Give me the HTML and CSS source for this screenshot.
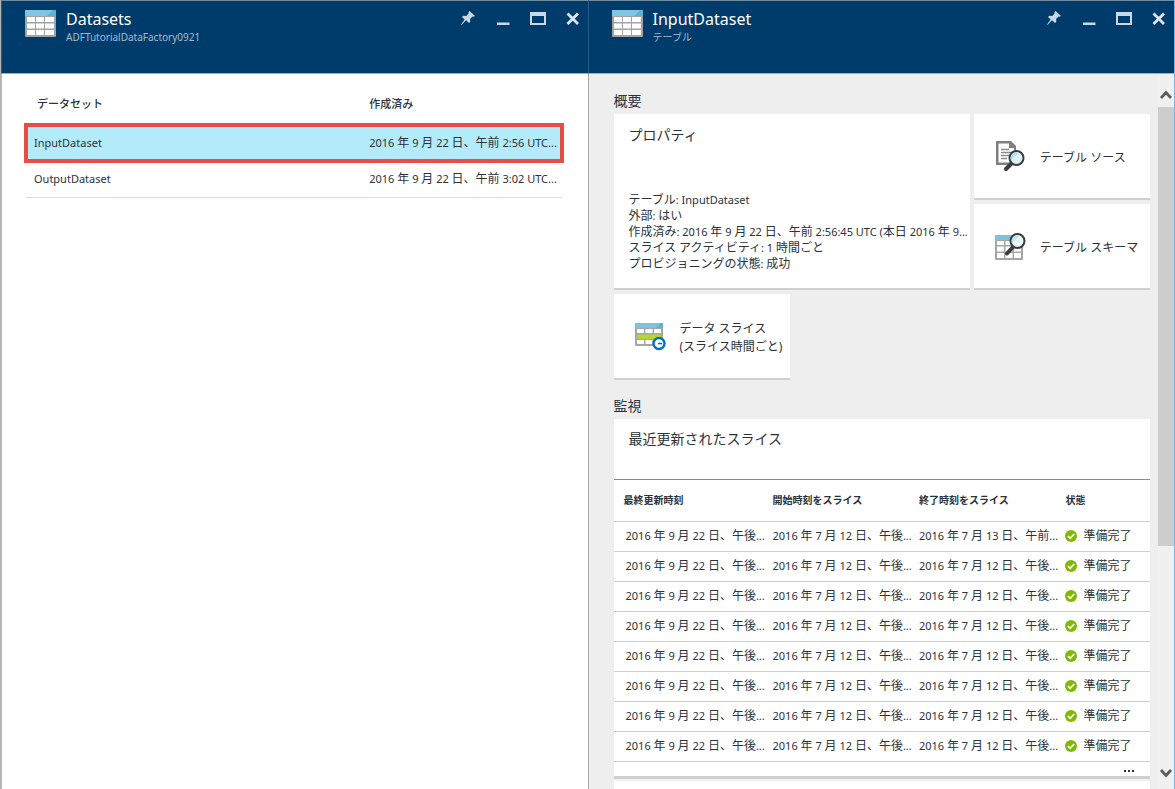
FILE: index.html
```html
<!DOCTYPE html>
<html lang="ja">
<head>
<meta charset="utf-8">
<title>Datasets - InputDataset</title>
<link rel="stylesheet" href="styles.css">
</head>
<body>
<svg class="sprite" aria-hidden="true">
  <symbol id="i-table" viewBox="0 0 31 27">
    <rect width="31" height="27" rx="1" fill="#a3a3a3"/>
    <path d="M0 6V1a1 1 0 0 1 1-1h29a1 1 0 0 1 1 1v5z" fill="#59b4d9"/>
    <path d="M0 6V1a1 1 0 0 1 1-1h27l-6 6z" fill="#7fc6e2"/>
    <path d="M2 7h8v5H2zM11 7h8v5h-8zM20 7h9v5h-9zM2 13.500h8v5H2zM11 13.500h8v5h-8zM20 13.500h9v5h-9zM2 20h8v5H2zM11 20h8v5h-8zM20 20h9v5h-9z" fill="#fff"/>
  </symbol>
  <symbol id="i-pin" viewBox="0 0 16 16">
    <path d="M9.500 1 15 6l-1.600.8-.9-.3-2.400 2.500.2 2.800-1.300 1.200-3-2.800L1.500 15l-.4-.4 3.500-5L2 7l1.300-1.200 3 .1L8.600 3.500l-.2-1z" fill="#c9d8e6"/>
  </symbol>
  <symbol id="i-min" viewBox="0 0 16 16"><path d="M2 12.500h12.500v2.500H2z" fill="#c9d8e6"/></symbol>
  <symbol id="i-max" viewBox="0 0 16 16"><path d="M0 2h16v13H0zM2 6v7h12V6z" fill="#c9d8e6" fill-rule="evenodd"/></symbol>
  <symbol id="i-close" viewBox="0 0 16 16"><path d="m2.500 3.500 10.500 10.500M13 3.500 2.500 14" stroke="#dce6ee" stroke-width="2.800" fill="none"/></symbol>
  <symbol id="i-ok" viewBox="0 0 12 12"><circle cx="6" cy="6" r="6" fill="#7fba00"/><path d="m3 6 2.200 2.300L9.200 4" stroke="#fff" stroke-width="1.800" fill="none"/></symbol>
</svg>

<main class="blades">
  <section class="blade">
    <header class="bar">
      <svg class="bar-icon"><use href="#i-table"/></svg>
      <div class="bar-text">
        <h1>Datasets</h1>
        <p>ADFTutorialDataFactory0921</p>
      </div>
      <div class="bar-actions">
        <button aria-label="ピン留め"><svg><use href="#i-pin"/></svg></button>
        <button aria-label="最小化"><svg><use href="#i-min"/></svg></button>
        <button aria-label="最大化"><svg><use href="#i-max"/></svg></button>
        <button aria-label="閉じる"><svg><use href="#i-close"/></svg></button>
      </div>
    </header>
    <div class="list">
      <table class="datasets">
        <thead><tr><th class="name">データセット</th><th>作成済み</th></tr></thead>
        <tbody>
          <tr class="selected"><td class="mixed">InputDataset</td><td class="mixed">2016 年 9 月 22 日、午前 2:56 UTC...</td></tr>
          <tr><td class="mixed">OutputDataset</td><td class="mixed">2016 年 9 月 22 日、午前 3:02 UTC...</td></tr>
        </tbody>
      </table>
    </div>
  </section>

  <section class="blade">
    <header class="bar">
      <svg class="bar-icon"><use href="#i-table"/></svg>
      <div class="bar-text">
        <h1>InputDataset</h1>
        <p>テーブル</p>
      </div>
      <div class="bar-actions">
        <button aria-label="ピン留め"><svg><use href="#i-pin"/></svg></button>
        <button aria-label="最小化"><svg><use href="#i-min"/></svg></button>
        <button aria-label="最大化"><svg><use href="#i-max"/></svg></button>
        <button aria-label="閉じる"><svg><use href="#i-close"/></svg></button>
      </div>
    </header>
    <div class="detail">
      <div class="lenses">
        <h2>概要</h2>
        <div class="tiles">
          <article class="tile props">
            <h3>プロパティ</h3>
            <ul>
              <li class="mixed">テーブル: InputDataset</li>
              <li class="mixed">外部: はい</li>
              <li class="mixed">作成済み: 2016 年 9 月 22 日、午前 2:56:45 UTC (本日 2016 年 9...</li>
              <li class="mixed">スライス アクティビティ: 1 時間ごと</li>
              <li class="mixed">プロビジョニングの状態: 成功</li>
            </ul>
          </article>
          <button class="tile link">
            <svg viewBox="0 0 32 32">
              <path d="M2 1h15l5 5v19H2z" fill="#7f7f7f"/>
              <path d="M4.500 3.500H15V8h5v14.500H4.500z" fill="#fff"/>
              <path d="M7 9.500h8M7 12.500h11M7 15.500h8M7 18.500h6" stroke="#8c8c8c" stroke-width="1.400"/>
              <path d="m18 23-6 6" stroke="#3c3c3c" stroke-width="4" stroke-linecap="round"/>
              <circle cx="22.500" cy="18" r="7" fill="#dff1fb" stroke="#3c3c3c" stroke-width="2"/>
              <path d="M17 20a6 6 0 0 1 8-7.500z" fill="#b5def0"/>
            </svg>
            <span>テーブル ソース</span>
          </button>
          <button class="tile link">
            <svg viewBox="0 0 32 32">
              <rect x="1" y="5" width="28" height="25" rx="1" fill="#a6a6a6"/>
              <path d="M1 10V6a1 1 0 0 1 1-1h27v5z" fill="#79c3e0"/>
              <path d="M3 11h7v4H3zM11.500 11h7v4h-7zM20 11h7v4h-7zM3 16.500h7v5H3zM11.500 16.500h7v5h-7zM20 16.500h7v5h-7zM3 23h7v5H3zM11.500 23h7v5h-7zM20 23h7v5h-7z" fill="#fff"/>
              <path d="m19 17-6 6.500" stroke="#3c3c3c" stroke-width="4" stroke-linecap="round"/>
              <circle cx="23.500" cy="11" r="7" fill="#eaf6fc" stroke="#3c3c3c" stroke-width="2"/>
              <path d="M18 13a6 6 0 0 1 8-7.500z" fill="#c2e3f2"/>
            </svg>
            <span>テーブル スキーマ</span>
          </button>
          <button class="tile link">
            <svg viewBox="0 0 32 32">
              <rect x="1" y="3" width="28" height="23" rx="1" fill="#a6a6a6"/>
              <path d="M1 8V4a1 1 0 0 1 1-1h27v5z" fill="#59b4d9"/>
              <path d="M1 8V4a1 1 0 0 1 1-1h25l-5 5z" fill="#7ac4e1"/>
              <path d="M3 9h7v4H3zM11.500 9h7v4h-7zM20 9h7v4h-7zM3 20h7v4H3zM11.500 20h7v4h-7z" fill="#fff"/>
              <path d="M3 14.500h24V19H3z" fill="#b8d432"/>
              <circle cx="25" cy="23.500" r="5.500" fill="#fff" stroke="#0072c6" stroke-width="2.400"/>
              <path d="M24 23.500h4" stroke="#0072c6" stroke-width="1.600"/>
            </svg>
            <span>データ スライス<br>(スライス時間ごと)</span>
          </button>
        </div>

        <h2>監視</h2>
        <article class="panel">
          <h3>最近更新されたスライス</h3>
          <table class="slices">
            <thead><tr><th class="updated">最終更新時刻</th><th>開始時刻をスライス</th><th>終了時刻をスライス</th><th class="state">状態</th></tr></thead>
            <tbody>
              <tr><td class="mixed">2016 年 9 月 22 日、午後...</td><td class="mixed">2016 年 7 月 12 日、午後...</td><td class="mixed">2016 年 7 月 13 日、午前...</td><td><svg class="ok"><use href="#i-ok"/></svg>準備完了</td></tr>
              <tr><td class="mixed">2016 年 9 月 22 日、午後...</td><td class="mixed">2016 年 7 月 12 日、午後...</td><td class="mixed">2016 年 7 月 12 日、午後...</td><td><svg class="ok"><use href="#i-ok"/></svg>準備完了</td></tr>
              <tr><td class="mixed">2016 年 9 月 22 日、午後...</td><td class="mixed">2016 年 7 月 12 日、午後...</td><td class="mixed">2016 年 7 月 12 日、午後...</td><td><svg class="ok"><use href="#i-ok"/></svg>準備完了</td></tr>
              <tr><td class="mixed">2016 年 9 月 22 日、午後...</td><td class="mixed">2016 年 7 月 12 日、午後...</td><td class="mixed">2016 年 7 月 12 日、午後...</td><td><svg class="ok"><use href="#i-ok"/></svg>準備完了</td></tr>
              <tr><td class="mixed">2016 年 9 月 22 日、午後...</td><td class="mixed">2016 年 7 月 12 日、午後...</td><td class="mixed">2016 年 7 月 12 日、午後...</td><td><svg class="ok"><use href="#i-ok"/></svg>準備完了</td></tr>
              <tr><td class="mixed">2016 年 9 月 22 日、午後...</td><td class="mixed">2016 年 7 月 12 日、午後...</td><td class="mixed">2016 年 7 月 12 日、午後...</td><td><svg class="ok"><use href="#i-ok"/></svg>準備完了</td></tr>
              <tr><td class="mixed">2016 年 9 月 22 日、午後...</td><td class="mixed">2016 年 7 月 12 日、午後...</td><td class="mixed">2016 年 7 月 12 日、午後...</td><td><svg class="ok"><use href="#i-ok"/></svg>準備完了</td></tr>
              <tr><td class="mixed">2016 年 9 月 22 日、午後...</td><td class="mixed">2016 年 7 月 12 日、午後...</td><td class="mixed">2016 年 7 月 12 日、午後...</td><td><svg class="ok"><use href="#i-ok"/></svg>準備完了</td></tr>
            </tbody>
          </table>
          <button class="more" aria-label="その他"><svg viewBox="0 0 12 4"><path d="M1 1h2v2H1zM5 1h2v2H5zM9 1h2v2H9z" fill="#333"/></svg></button>
        </article>
        <article class="panel next"></article>
      </div>
      <div class="scroll">
        <button aria-label="上へ"><svg viewBox="0 0 14 12"><path d="m2 9 5-5.500L12 9" stroke="#5c5c5c" stroke-width="2.800" fill="none"/></svg></button>
        <div class="track"><div class="thumb"></div></div>
        <button aria-label="下へ"><svg viewBox="0 0 14 12"><path d="m2 3 5 5.500L12 3" stroke="#5c5c5c" stroke-width="2.800" fill="none"/></svg></button>
      </div>
    </div>
  </section>
</main>
<script src="script.js"></script>
</body>
</html>
```
FILE: styles.css
```css
* { box-sizing: border-box; }
body {
  margin: 0;
  color: #2b323b;
  font: 12px/16px "Noto Sans", "Noto Sans CJK JP", sans-serif;
}
h1, h2, h3, p, ul { margin: 0; padding: 0; font-weight: 400; }
ul { list-style: none; }
button { border: 0; padding: 0; background: none; color: inherit; font: inherit; }
svg { display: block; }
.sprite { position: absolute; width: 0; height: 0; }
.latin { font-size: 11px; }

.blades { display: flex; height: 100vh; overflow: hidden; border-right: 1px solid #78b4e4; }
.blade { flex: 1 1 0; min-width: 0; display: flex; flex-direction: column; border-left: 1px solid #a9a9a9; }
.blade:first-child { border-left: 2px solid #b4b4b4; }

.bar {
  flex: none;
  display: flex;
  height: 74px;
  margin-left: -1px;
  padding: 8px 7px 0 23px;
  background: #003c6b;
  border: solid #6f8ca5;
  border-width: 1px 0 1px 1px;
  border-left-color: #2a5c86;
  border-bottom-color: #a3adb5;
}
.bar-icon { width: 31px; height: 27px; margin-top: 1px; }
.bar-text { flex: 1; padding-left: 10px; color: #fff; }
.bar-text h1 { font-size: 16px; line-height: 20px; }
.bar-text p { font-size: 10px; line-height: 17px; color: #a3bbd0; }
.bar-actions { display: flex; gap: 19px; }
.bar-actions button, .bar-actions svg { width: 16px; height: 16px; }
.bar-actions button { margin-top: 1px; }

.list { flex: 1; padding: 14px 26px 0 24px; background: #fff; }
table { width: 100%; border-collapse: collapse; table-layout: fixed; }
th { text-align: left; font-weight: 500; }
td, th { padding: 0; white-space: nowrap; }
.datasets th, .datasets td { padding-left: 8px; }
.datasets th { height: 37px; padding-bottom: 5px; font-size: 11px; }
.datasets .name { width: 62.6%; padding-left: 11px; }
.datasets td { height: 36px; border-bottom: 1px solid #dcdcdc; }
.datasets .selected td { background: #b3ebfa; border-bottom: 0; }
.datasets .selected { outline: 4px solid #e94b45; outline-offset: -2px; }

.detail { flex: 1; min-height: 0; display: flex; background: #eee; }
.lenses { flex: 1; min-width: 0; padding: 17px 8px 0 25px; overflow: hidden; }
h2 { font-size: 14px; line-height: 20px; padding-bottom: 3px; }
h3 { font-size: 14px; line-height: 20px; }
.tiles {
  display: grid;
  grid-template-columns: repeat(3, minmax(0, 1fr));
  grid-auto-rows: 86px;
  gap: 4px;
  margin-bottom: 16px;
}
.tile { background: #fff; border-bottom: 2px solid #cfcfcf; }
.props { grid-area: 1 / 1 / 3 / 3; padding: 11px 0 0 15px; overflow: hidden; }
.props ul { padding-top: 47px; }
.props li { white-space: nowrap; }
.link { display: flex; align-items: center; gap: 14px; padding-left: 20px; text-align: left; line-height: 18px; white-space: nowrap; }
.link svg { flex: none; width: 32px; height: 32px; }
.link span { padding-top: 4px; }

.panel { background: #fff; border-bottom: 3px solid #d0d0d0; }
.panel h3 { padding: 10px 15px 30px; border-bottom: 1px solid #8c8c8c; }
.slices th, .slices td { padding-left: 12px; border-bottom: 1px solid #cfcfcf; }
.slices th { width: 27.3%; height: 41px; font-size: 10px; font-weight: 700; }
.slices .updated { width: 27.4%; padding-left: 10px; }
.slices .state { width: 18%; }
.slices td { height: 30px; }
.ok { display: inline-block; width: 12px; height: 12px; margin-right: 6px; vertical-align: -2px; }
.more { display: flex; align-items: center; justify-content: flex-end; width: 100%; height: 14px; padding: 4px 15px 0 0; }
.more svg { width: 12px; height: 4px; }
.next { margin-top: 2px; height: 80px; }

.scroll { flex: none; width: 16px; display: flex; flex-direction: column; background: #f0f0f0; }
.scroll button { flex: none; height: 33px; display: flex; align-items: center; justify-content: center; padding-top: 8px; }
.scroll button:last-child { padding-top: 0; }
.scroll svg { width: 14px; height: 12px; }
.track { flex: 1; }
.thumb { height: 67.6%; background: #cdcdcd; }
```
FILE: script.js
```js
// Latin runs are set one size below the Japanese text around them.
document.querySelectorAll(".mixed").forEach((el) => {
  el.innerHTML = el.textContent.replace(/[ -~]+/g, '<span class="latin">$&</span>');
});
```
